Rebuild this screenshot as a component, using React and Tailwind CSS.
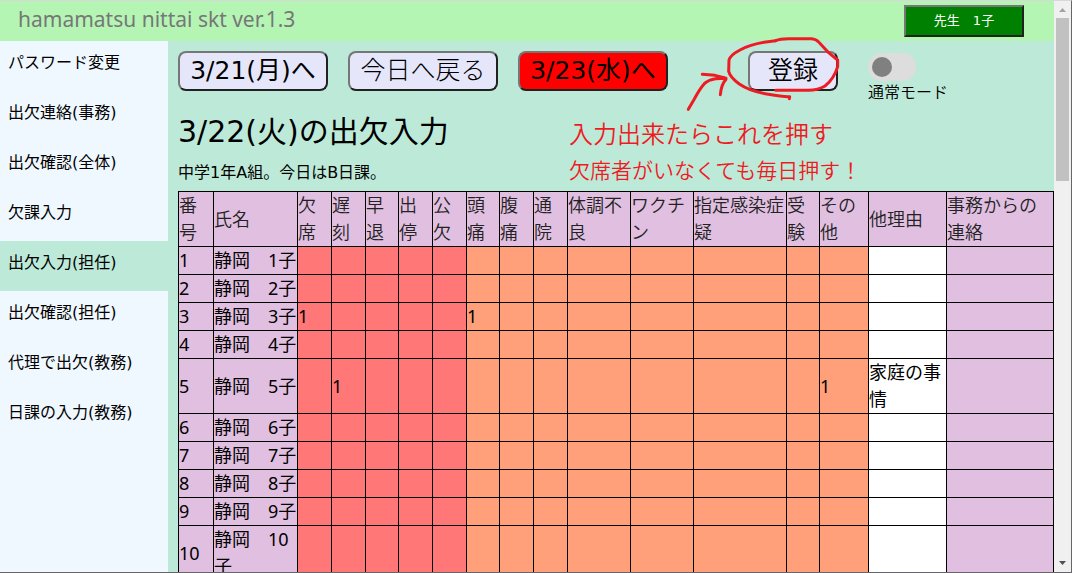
import React from "react";

const menu = [
  "パスワード変更",
  "出欠連絡(事務)",
  "出欠確認(全体)",
  "欠課入力",
  "出欠入力(担任)",
  "出欠確認(担任)",
  "代理で出欠(教務)",
  "日課の入力(教務)",
];

const columns = [
  { label: "番号", col: "w-[35px]", cell: "bg-[#e0bfe0]" },
  { label: "氏名", col: "w-[84px]", cell: "bg-[#e0bfe0]" },
  { label: "欠席", col: "w-[34px]", cell: "bg-[#ff7777]" },
  { label: "遅刻", col: "w-[34px]", cell: "bg-[#ff7777]" },
  { label: "早退", col: "w-[33px]", cell: "bg-[#ff7777]" },
  { label: "出停", col: "w-[34px]", cell: "bg-[#ff7777]" },
  { label: "公欠", col: "w-[34px]", cell: "bg-[#ff7777]" },
  { label: "頭痛", col: "w-[33px]", cell: "bg-[#ffa07a]" },
  { label: "腹痛", col: "w-[34px]", cell: "bg-[#ffa07a]" },
  { label: "通院", col: "w-[34px]", cell: "bg-[#ffa07a]" },
  { label: "体調不良", col: "w-[63px]", cell: "bg-[#ffa07a]" },
  { label: "ワクチン", col: "w-[63px]", cell: "bg-[#ffa07a]" },
  { label: "指定感染症疑", col: "w-[93px]", cell: "bg-[#ffa07a]" },
  { label: "受験", col: "w-[33px]", cell: "bg-[#ffa07a]" },
  { label: "その他", col: "w-[49px]", cell: "bg-[#ffa07a]" },
  { label: "他理由", col: "w-[78px]", cell: "bg-white" },
  { label: "事務からの連絡", col: "w-[107px]", cell: "bg-[#e0bfe0]" },
];

const marks = {
  3: { 欠席: "1", 頭痛: "1" },
  5: { 遅刻: "1", その他: "1", 他理由: "家庭の事情" },
};

const rows = Array.from({ length: 10 }, (_, i) => ({
  番号: i + 1,
  氏名: `静岡　${i + 1}子`,
  ...marks[i + 1],
}));

const raised =
  "border-2 border-t-[#767676] border-l-[#767676] border-r-[#212121] border-b-[#212121]";

function ActionButton({ children, className }) {
  return (
    <button
      type="button"
      className={`${raised} h-10 shrink-0 rounded-lg text-[25px] leading-9 whitespace-nowrap ${className}`}
    >
      {children}
    </button>
  );
}

function Annotation() {
  return (
    <div className="pointer-events-none absolute -top-[21px] -left-[68px] text-[#ed1c24]">
      <svg
        width="160"
        height="85"
        viewBox="0 90 480 255"
        fill="none"
        stroke="currentColor"
        strokeWidth="9"
        strokeLinecap="round"
        strokeLinejoin="round"
        className="block"
      >
        <path d="M287 122L258 126Q212 133 180 150Q150 166 147 180L146 214Q150 231 178 252Q208 273 265 283Q310 291 329 290L328 296" />
        <path d="M287 122Q300 116 325 116H395Q408 117 416 126L446 158Q462 172 473 180V200Q462 237 435 258Q415 270 385 271H287" />
        <path d="M25 328L43 297Q58 268 73 251Q85 239 107 236L138 235M67 223L105 226L132 233L138 238Q124 252 121 284" />
      </svg>
    </div>
  );
}

function Scrollbar() {
  return (
    <div className="flex w-[17px] shrink-0 flex-col items-center bg-[#f0f0f0]" aria-hidden="true">
      <svg width="17" height="17" viewBox="0 0 17 17" className="shrink-0">
        <path d="M5 11h7L8.500 7z" fill="#a3a3a3" />
      </svg>
      <div className="h-[163px] w-[13px] shrink-0 bg-[#c1c1c1]" />
      <div className="grow" />
      <svg width="17" height="17" viewBox="0 0 17 17" className="shrink-0">
        <path d="M5 6h7L8.500 10z" fill="#505050" />
      </svg>
    </div>
  );
}

export default function App() {
  return (
    <div className="flex h-screen overflow-hidden border-t border-r border-b border-t-[#d8d8dc] border-r-[#66666a] border-b-[#66666a] font-['DejaVu_Sans','Noto_Sans_CJK_JP',sans-serif] text-black">
      <div className="flex min-w-0 grow flex-col overflow-hidden">
        <header className="flex h-10 shrink-0 items-center justify-between bg-[#b4f5b4] pr-[30px] pl-[18px]">
          <span className="pb-1 font-['Noto_Sans',sans-serif] text-[21px] leading-8 text-[#777777]">
            hamamatsu nittai skt ver.1.3
          </span>
          <button type="button" className={`${raised} h-8 w-[120px] bg-[#008000] text-[13px] text-white`}>
            先生　1子
          </button>
        </header>

        <div className="flex min-h-0 grow">
          <nav className="flex w-[168px] shrink-0 flex-col bg-[#f0f8ff]">
            {menu.map((item) => (
              <a
                key={item}
                href="#"
                aria-current={item === "出欠入力(担任)" ? "page" : undefined}
                className="block h-[50px] px-2 pt-[10px] text-base leading-6 whitespace-nowrap aria-[current=page]:bg-[#bdead8]"
              >
                {item}
              </a>
            ))}
          </nav>

          <main className="min-w-0 grow bg-[#bdead8] pt-[10px] pl-[10px]">
            <div className="flex items-start">
              <div className="flex gap-5">
                <ActionButton className="w-[150px] bg-[#e6e6fa]">3/21(月)へ</ActionButton>
                <ActionButton className="w-[150px] bg-[#e6e6fa] font-light">今日へ戻る</ActionButton>
                <ActionButton className="w-[150px] bg-[#ff0000]">3/23(水)へ</ActionButton>
              </div>
              <div className="relative ml-20">
                <ActionButton className="w-[90px] bg-[#e6e6fa] font-[350]">登録</ActionButton>
                <Annotation />
                <div className="pointer-events-none absolute top-[66px] -left-[179px] font-[350] whitespace-nowrap text-[#ed1c24]">
                  <p className="text-2xl leading-9">入力出来たらこれを押す</p>
                  <p className="text-[21px] leading-9">欠席者がいなくても毎日押す！</p>
                </div>
              </div>
              <label className="ml-[30px] flex h-[50px] flex-col pt-0.5 text-base leading-6 font-[350] whitespace-nowrap">
                <input type="checkbox" className="peer sr-only" />
                <span className="flex h-7 w-12 shrink-0 items-center rounded-full bg-[#dddddd] px-1 peer-checked:justify-end">
                  <span className="size-5 rounded-full bg-[#808080]" />
                </span>
                通常モード
              </label>
            </div>

            <h1 className="mt-2 text-[30px] leading-[45px] font-normal">3/22(火)の出欠入力</h1>
            <p className="mt-[7px] text-base leading-6">中学1年A組。今日はB日課。</p>

            <table className="mt-1.5 w-full table-fixed border-collapse font-['Noto_Sans','Noto_Sans_CJK_JP',sans-serif] text-lg leading-[27px]">
              <colgroup>
                {columns.map((c) => (
                  <col key={c.label} className={c.col} />
                ))}
              </colgroup>
              <thead>
                <tr>
                  {columns.map((c) => (
                    <th
                      key={c.label}
                      className="border border-black bg-[#e0bfe0] p-0 text-left font-[350] break-all text-[#222222]"
                    >
                      {c.label}
                    </th>
                  ))}
                </tr>
              </thead>
              <tbody>
                {rows.map((row) => (
                  <tr key={row.番号} className="h-7">
                    {columns.map((c) => (
                      <td key={c.label} className={`border border-black p-0 text-left ${c.cell}`}>
                        {row[c.label]}
                      </td>
                    ))}
                  </tr>
                ))}
              </tbody>
            </table>
          </main>
        </div>
      </div>
      <Scrollbar />
    </div>
  );
}
